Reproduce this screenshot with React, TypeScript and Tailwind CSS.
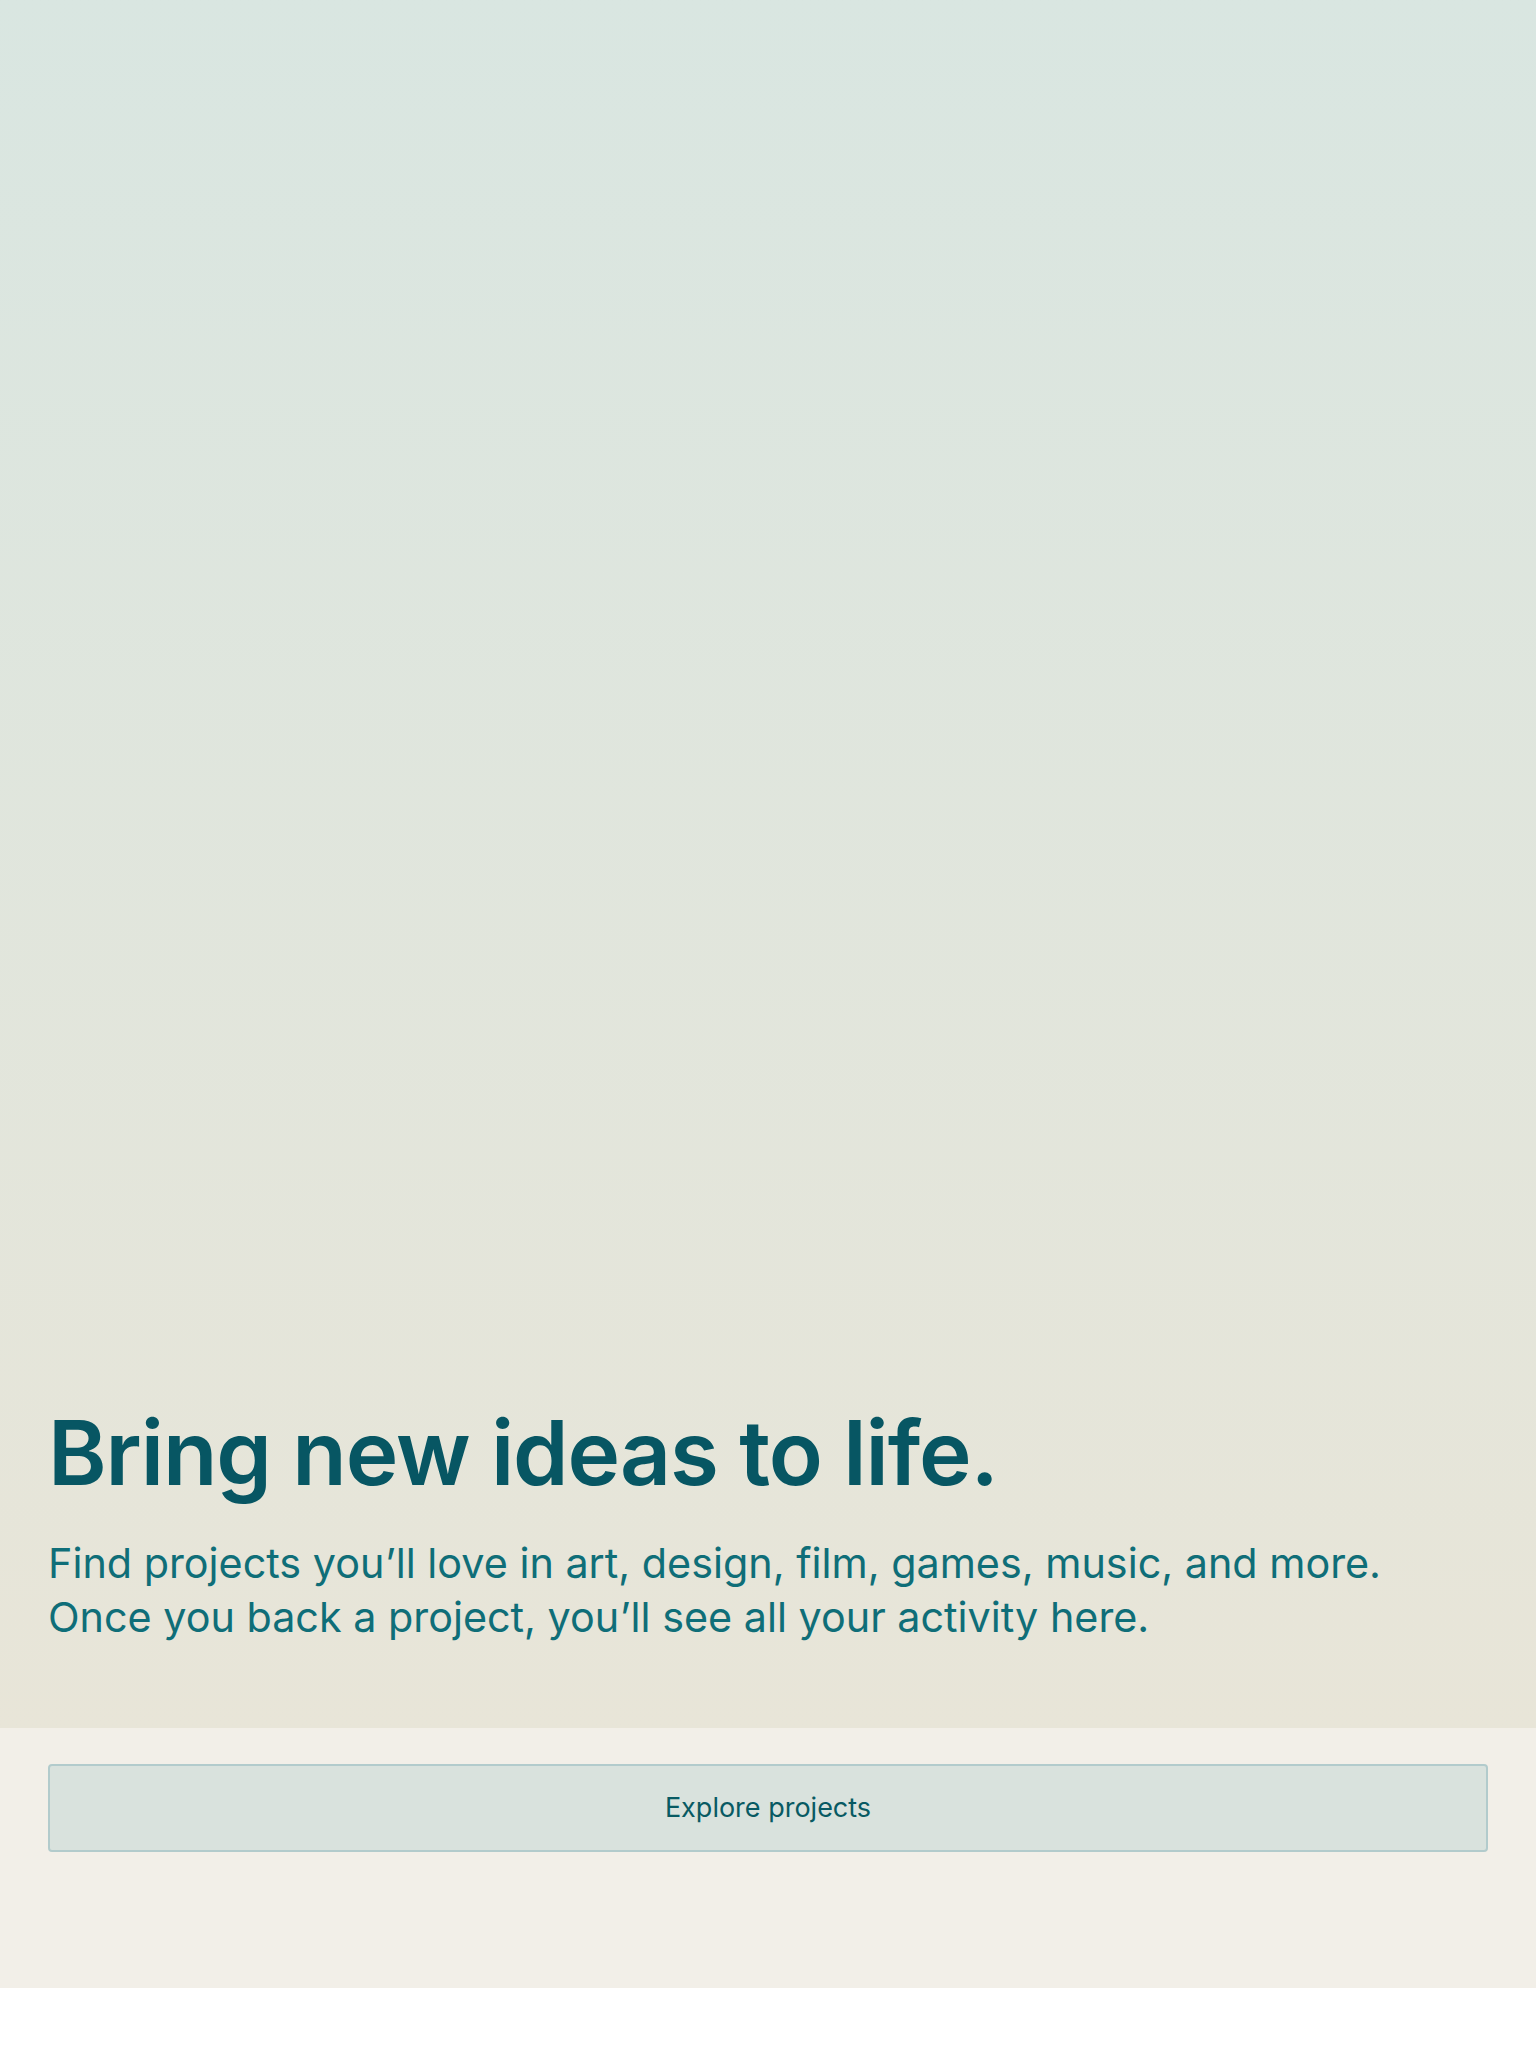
export default function App() {
  return (
    <div className="w-full font-['Inter','Liberation_Sans',sans-serif]">
      <section className="flex h-[1728px] flex-col justify-end bg-gradient-to-b from-[#d9e6e1] to-[#e8e5d8] px-12 pb-[84px]">
        <h1 className="text-[89px] font-semibold leading-[1.1] tracking-[-0.012em] text-[#075663]">
          Bring new ideas to life.
        </h1>
        <p className="mt-[34px] text-[41.3px] leading-[54px] text-[#0f6e78]">
          Find projects you’ll love in art, design, film, games, music, and more.
          <br />
          Once you back a project, you’ll see all your activity here.
        </p>
      </section>
      <section className="h-[260px] bg-[#f2efe8] px-12 pt-9">
        <button className="flex h-[88px] w-full items-center justify-center rounded-[4px] border-2 border-[#b2cbcc] bg-[#d9e2dd] text-[27px] text-[#085a63]">
          Explore projects
        </button>
      </section>
    </div>
  );
}
